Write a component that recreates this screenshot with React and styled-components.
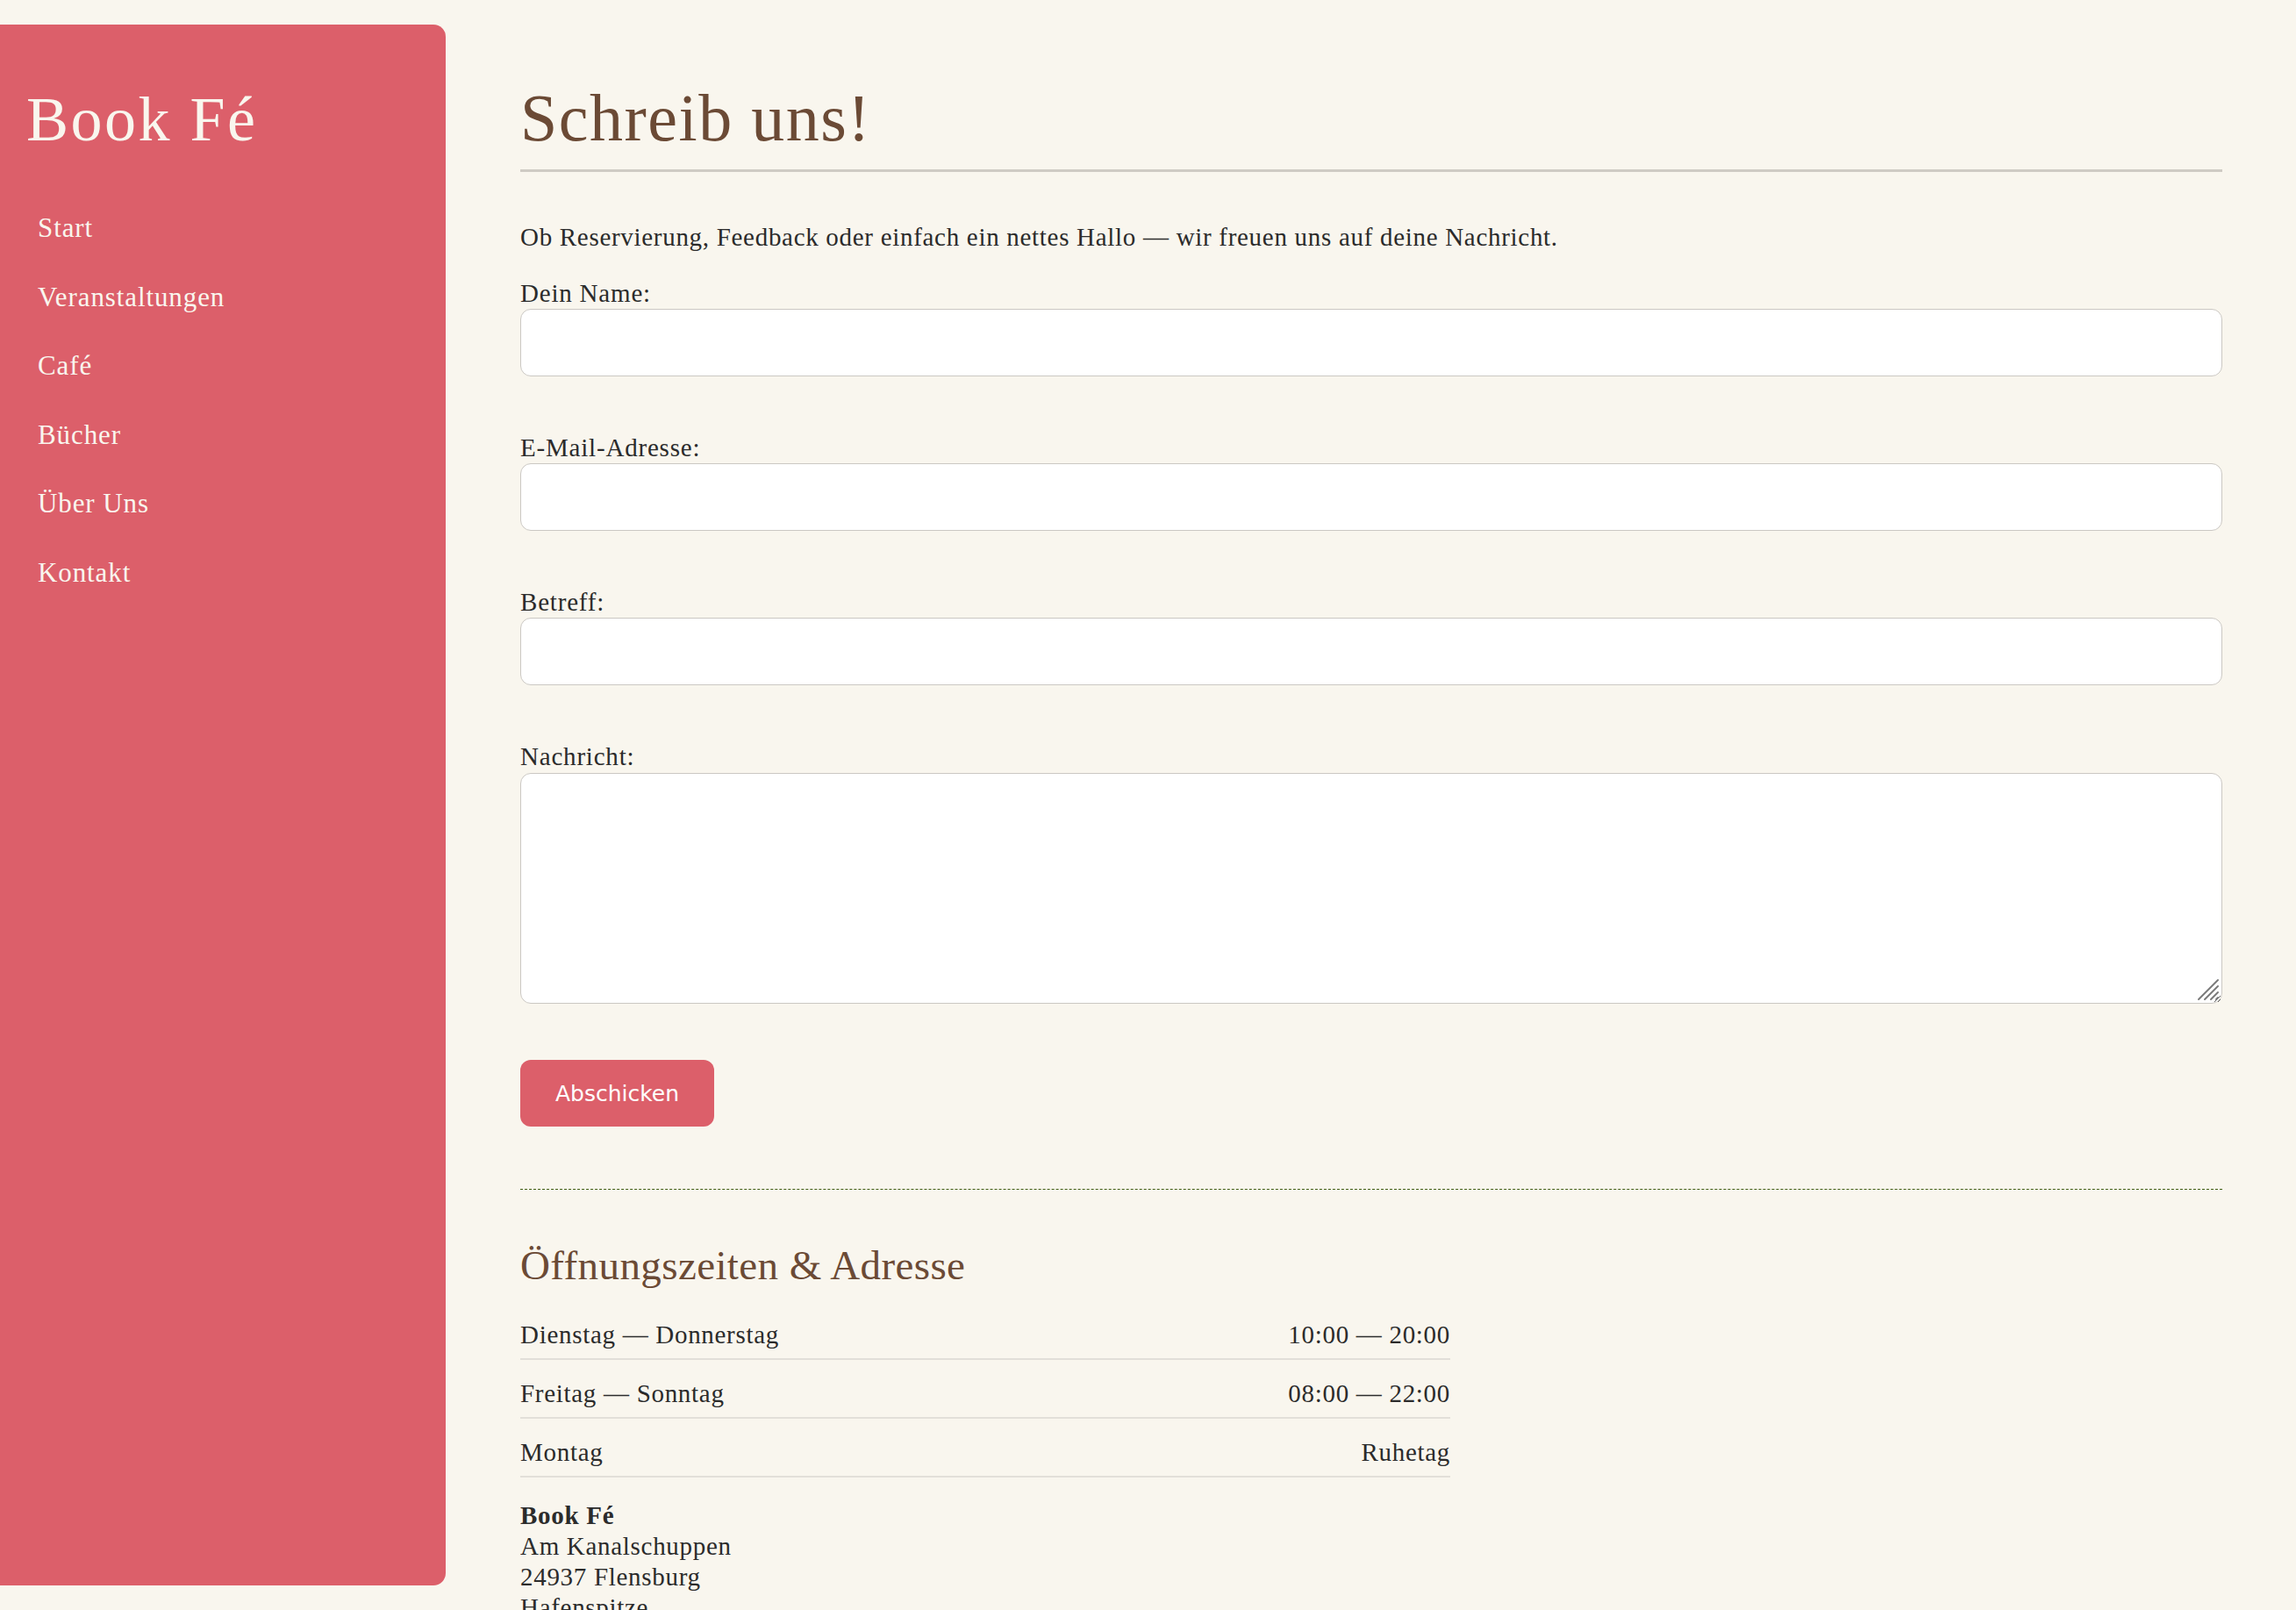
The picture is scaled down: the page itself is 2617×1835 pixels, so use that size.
import React from 'react';
import styled, { createGlobalStyle } from 'styled-components';

const GlobalStyle = createGlobalStyle`
  html, body {
    margin: 0;
    padding: 0;
    background: #f9f6ee;
  }
  body {
    font-family: "Liberation Serif", "Times New Roman", serif;
    color: #2b2b2b;
  }
  * { box-sizing: border-box; }
`;

const Layout = styled.div`
  display: flex;
  align-items: flex-start;
  min-height: 100vh;
`;

const Sidebar = styled.aside`
  flex: 0 0 508px;
  width: 508px;
  height: calc(100vh - 56px);
  margin-top: 28px;
  position: sticky;
  top: 28px;
  background: #dc5f6a;
  border-radius: 0 14px 14px 0;
  padding: 66px 30px 0;
  color: #f9f6ee;
`;

const Logo = styled.div`
  font-size: 72px;
  line-height: 84px;
  letter-spacing: 2.5px;
  margin-bottom: 43px;
`;

const Nav = styled.nav`
  display: flex;
  flex-direction: column;
`;

const NavLink = styled.a`
  display: block;
  padding: 20px 13px;
  font-size: 31px;
  line-height: 38.5px;
  letter-spacing: 0.9px;
  color: #f9f6ee;
  text-decoration: none;
  cursor: pointer;
`;

const Main = styled.main`
  flex: 1;
  min-width: 0;
  padding: 0 84px 60px 85px;
`;

const Title = styled.h1`
  margin: 91px 0 0;
  padding-bottom: 16px;
  border-bottom: 3px solid #cfcbc4;
  font-size: 76px;
  line-height: 86px;
  letter-spacing: 1.5px;
  font-weight: 400;
  color: #6b4a35;
`;

const Intro = styled.p`
  margin: 55px 0 27px;
  font-size: 29px;
  line-height: 39px;
  letter-spacing: 0.7px;
`;

const Field = styled.div`
  position: relative;
  margin-bottom: 64px;
`;

const Label = styled.label`
  display: block;
  font-size: 29px;
  line-height: 34px;
  letter-spacing: 0.8px;
  margin-bottom: 1px;
`;

const Input = styled.input`
  display: block;
  width: 100%;
  height: 77px;
  border: 1.5px solid #cbc8c3;
  border-radius: 12px;
  background: #fff;
  font: inherit;
  font-size: 26px;
  padding: 0 18px;
  outline: none;
`;

const TextArea = styled.textarea`
  display: block;
  width: 100%;
  height: 263px;
  margin-top: 2px;
  border: 1.5px solid #cbc8c3;
  border-radius: 12px;
  background: #fff;
  font: inherit;
  font-size: 26px;
  padding: 14px 18px;
  outline: none;
  resize: vertical;
`;

const Grip = styled.svg`
  position: absolute;
  right: 3px;
  bottom: 3px;
  width: 26px;
  height: 26px;
  pointer-events: none;
`;

const SubmitButton = styled.button`
  display: block;
  width: 221px;
  height: 76px;
  margin-top: 2px;
  border: none;
  border-radius: 12px;
  background: #dc5f6a;
  color: #fff;
  font-family: "DejaVu Sans", Verdana, sans-serif;
  font-size: 25px;
  cursor: pointer;
`;

const Divider = styled.hr`
  margin: 71px 0 0;
  border: none;
  border-top: 1.5px dashed #3f5c12;
  height: 0;
`;

const SectionTitle = styled.h2`
  margin: 59px 0 13px;
  font-size: 47px;
  line-height: 55px;
  letter-spacing: 0.4px;
  font-weight: 400;
  color: #6b4a35;
`;

const Hours = styled.div`
  width: 1060px;
`;

const HoursRow = styled.div`
  display: flex;
  justify-content: space-between;
  padding: 19px 0 8px;
  border-bottom: 2px solid #e2dfd9;
  font-size: 29px;
  line-height: 38px;
  letter-spacing: 0.7px;
`;

const Address = styled.address`
  margin-top: 26px;
  font-style: normal;
  font-size: 29px;
  line-height: 35px;
  letter-spacing: 0.7px;

  strong { font-weight: 700; }
`;

const links = ['Start', 'Veranstaltungen', 'Café', 'Bücher', 'Über Uns', 'Kontakt'];

const hours = [
  ['Dienstag — Donnerstag', '10:00 — 20:00'],
  ['Freitag — Sonntag', '08:00 — 22:00'],
  ['Montag', 'Ruhetag'],
];

export default function App() {
  return (
    <>
      <GlobalStyle />
      <Layout>
        <Sidebar>
          <Logo>Book Fé</Logo>
          <Nav>
            {links.map(l => <NavLink key={l}>{l}</NavLink>)}
          </Nav>
        </Sidebar>

        <Main>
          <Title>Schreib uns!</Title>
          <Intro>
            Ob Reservierung, Feedback oder einfach ein nettes Hallo — wir freuen uns auf deine Nachricht.
          </Intro>

          <form onSubmit={e => e.preventDefault()}>
            <Field>
              <Label htmlFor="name">Dein Name:</Label>
              <Input id="name" type="text" />
            </Field>
            <Field>
              <Label htmlFor="email">E-Mail-Adresse:</Label>
              <Input id="email" type="email" />
            </Field>
            <Field>
              <Label htmlFor="betreff">Betreff:</Label>
              <Input id="betreff" type="text" />
            </Field>
            <Field>
              <Label htmlFor="nachricht">Nachricht:</Label>
              <TextArea id="nachricht" />
              <Grip viewBox="0 0 26 26">
                <g stroke="#7a7a7a" strokeWidth="2" strokeLinecap="round">
                  <line x1="2" y1="24" x2="24" y2="2" />
                  <line x1="9" y1="24" x2="24" y2="9" />
                  <line x1="16" y1="24" x2="24" y2="16" />
                  <line x1="22" y1="24" x2="24" y2="22" />
                </g>
              </Grip>
            </Field>
            <SubmitButton type="submit">Abschicken</SubmitButton>
          </form>

          <Divider />

          <SectionTitle>Öffnungszeiten &amp; Adresse</SectionTitle>
          <Hours>
            {hours.map(([day, time]) => (
              <HoursRow key={day}>
                <span>{day}</span>
                <span>{time}</span>
              </HoursRow>
            ))}
          </Hours>

          <Address>
            <strong>Book Fé</strong><br />
            Am Kanalschuppen<br />
            24937 Flensburg<br />
            Hafenspitze
          </Address>
        </Main>
      </Layout>
    </>
  );
}
